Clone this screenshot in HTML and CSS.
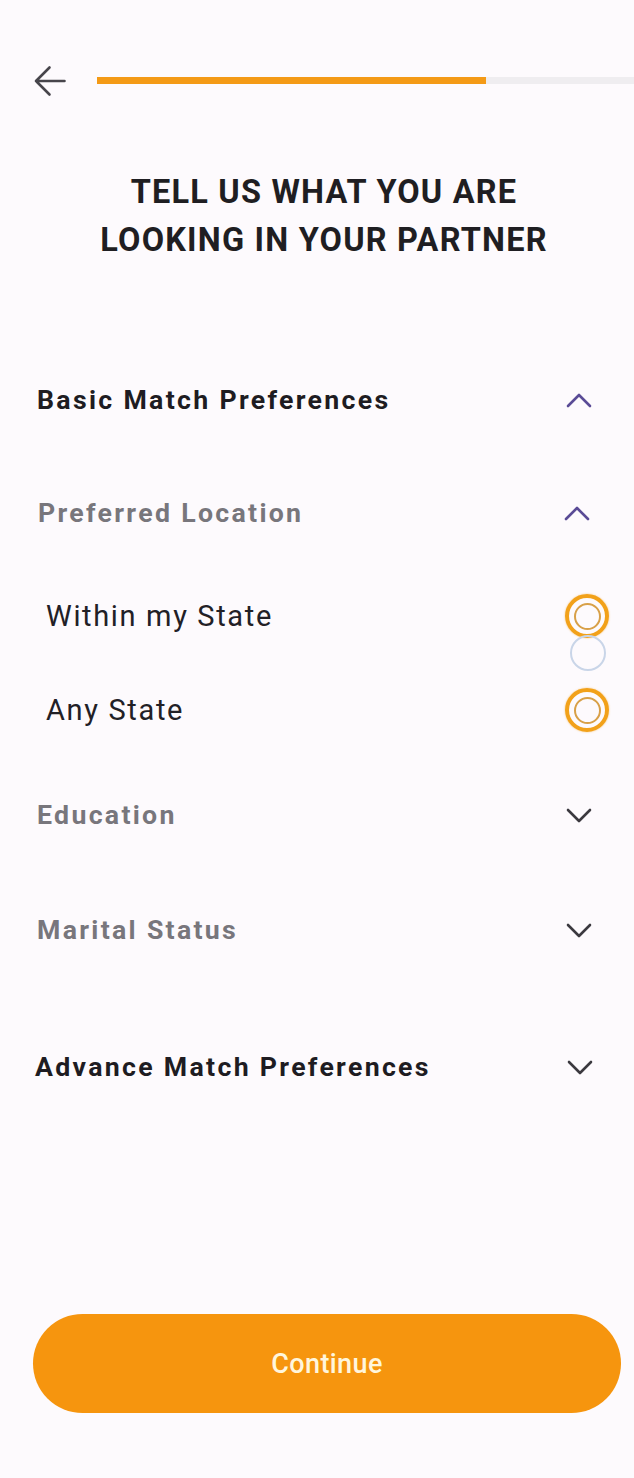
FILE: index.html
```html
<!DOCTYPE html>
<html>
<head>
<meta charset="utf-8">
<link rel="stylesheet" href="styles.css">
</head>
<body>
<div class="page">
  <header class="topbar">
    <button class="back" aria-label="Back">
      <svg width="33" height="32" viewBox="0 0 33 32"><path d="M31.5 16H3M16.5 2.5L3 16l13.5 13.5" fill="none" stroke="#47454b" stroke-width="2.6" stroke-linecap="round" stroke-linejoin="round"/></svg>
    </button>
    <div class="track"><div class="fill" style="width:72.4%"></div></div>
  </header>

  <h1 class="title">TELL US WHAT YOU ARE<br>LOOKING IN YOUR PARTNER</h1>

  <section class="group basic">
    <div class="group-head">
      <span class="group-title">Basic Match Preferences</span>
      <svg class="chev" width="28" height="28" viewBox="0 0 28 28"><path d="M3 20L14 9l11 11" fill="none" stroke="#5a4b96" stroke-width="2.6" stroke-linecap="round" stroke-linejoin="round"/></svg>
    </div>

    <div class="sub">
      <div class="sub-head">
        <span class="sub-title">Preferred Location</span>
        <svg class="chev" width="28" height="28" viewBox="0 0 28 28"><path d="M3 20L14 9l11 11" fill="none" stroke="#5a4b96" stroke-width="2.6" stroke-linecap="round" stroke-linejoin="round"/></svg>
      </div>
      <div class="options">
        <div class="option">
          <span class="opt-label">Within my State</span>
          <span class="radio"></span>
          <span class="ghost"></span>
        </div>
        <div class="option">
          <span class="opt-label">Any State</span>
          <span class="radio"></span>
        </div>
      </div>
    </div>

    <div class="sub">
      <div class="sub-head second">
        <span class="sub-title">Education</span>
        <svg class="chev" width="28" height="28" viewBox="0 0 28 28"><path d="M3 9l11 11 11-11" fill="none" stroke="#3b393f" stroke-width="2.6" stroke-linecap="round" stroke-linejoin="round"/></svg>
      </div>
    </div>

    <div class="sub">
      <div class="sub-head third">
        <span class="sub-title">Marital Status</span>
        <svg class="chev" width="28" height="28" viewBox="0 0 28 28"><path d="M3 9l11 11 11-11" fill="none" stroke="#3b393f" stroke-width="2.6" stroke-linecap="round" stroke-linejoin="round"/></svg>
      </div>
    </div>
  </section>

  <section class="group advance">
    <div class="group-head">
      <span class="group-title">Advance Match Preferences</span>
      <svg class="chev" width="28" height="28" viewBox="0 0 28 28"><path d="M3 9l11 11 11-11" fill="none" stroke="#3b393f" stroke-width="2.6" stroke-linecap="round" stroke-linejoin="round"/></svg>
    </div>
  </section>

  <div class="footer">
    <button class="continue">Continue</button>
  </div>
</div>
</body>
</html>
```

FILE: styles.css
```css
* { box-sizing: border-box; }
html, body { margin: 0; padding: 0; }
body {
  background: #fdfafd;
  font-family: Roboto, "Liberation Sans", sans-serif;
  color: #1e1c22;
}
.page {
  width: 634px;
  min-height: 1478px;
  display: flex;
  flex-direction: column;
}
.topbar {
  display: flex;
  align-items: center;
  padding-top: 64px;
  padding-left: 33px;
  height: 98px;
}
.back {
  background: none;
  border: 0;
  padding: 0;
  width: 33px;
  height: 32px;
  display: flex;
}
.track {
  flex: 1;
  margin-left: 31px;
  margin-top: -2px;
  height: 7px;
  background: #efedf0;
}
.fill {
  height: 100%;
  background: #f49a16;
}
.title {
  margin: 70px 0 0;
  padding-left: 14px;
  text-align: center;
  font-size: 32.5px;
  line-height: 48px;
  font-weight: 700;
  color: #1f1e22;
  letter-spacing: 1.2px;
}
.group { padding: 0 41px 0 37px; }
.basic { margin-top: 116px; }
.group-head, .sub-head {
  display: flex;
  align-items: center;
  justify-content: space-between;
  height: 40px;
}
.group-title {
  font-size: 26.7px;
  font-weight: 700;
  color: #1e1c22;
  letter-spacing: 2.3px;
}
.sub-head { margin-top: 73px; padding-left: 1px; padding-right: 2px; }
.sub-head.second { margin-top: 0; padding-left: 0; padding-right: 0; }
.sub-head.third { margin-top: 75px; padding-left: 0; padding-right: 0; }
.sub-title {
  font-size: 26.7px;
  font-weight: 700;
  color: #78767c;
  letter-spacing: 2.3px;
}
.chev { display: block; }
.options { padding: 61px 0 63px 9px; display: flex; flex-direction: column; gap: 50px; }
.option {
  position: relative;
  display: flex;
  align-items: center;
  justify-content: space-between;
  height: 44px;
}
.opt-label { font-size: 29px; color: #222026; letter-spacing: 1.65px; }
.radio {
  width: 44px;
  height: 44px;
  margin-right: -16px;
  border-radius: 50%;
  border: 4.5px solid #f2a11a;
  box-shadow: 0 0 2px rgba(242, 161, 26, 0.6);
  display: flex;
  align-items: center;
  justify-content: center;
}
.radio::after {
  content: "";
  width: 23px;
  height: 23px;
  border-radius: 50%;
  border: 2.5px solid #d8a048;
}
.ghost {
  position: absolute;
  right: -13px;
  top: 41px;
  width: 36px;
  height: 36px;
  border-radius: 50%;
  border: 2px solid #c9d5e8;
}
.advance { margin-top: 97px; padding-left: 35px; padding-right: 40px; }
.footer {
  margin-top: auto;
  padding: 0 13px 65px 33px;
}
.continue {
  width: 100%;
  height: 99px;
  border: 0;
  border-radius: 50px;
  background: #f6950e;
  color: #fff6dc;
  font-family: Roboto, "Liberation Sans", sans-serif;
  font-size: 27px;
  font-weight: 500;
  letter-spacing: 0.4px;
}
```
